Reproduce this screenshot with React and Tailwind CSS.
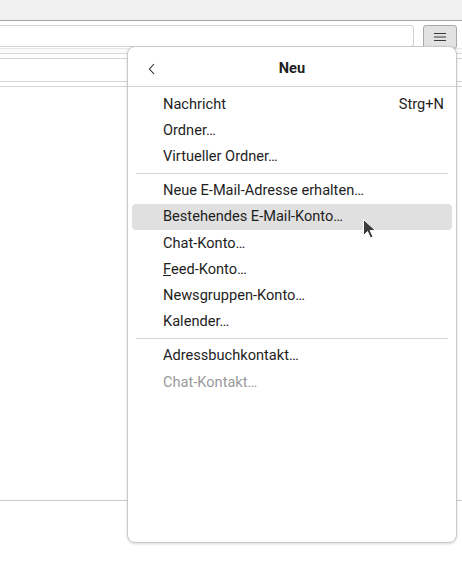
import React from "react";

const items = [
  { label: "Nachricht", shortcut: "Strg+N" },
  { label: "Ordner…" },
  { label: "Virtueller Ordner…" },
  { sep: true },
  { label: "Neue E-Mail-Adresse erhalten…" },
  { label: "Bestehendes E-Mail-Konto…", active: true },
  { label: "Chat-Konto…" },
  { label: <><span className="underline">F</span>eed-Konto…</> },
  { label: <>News<span className="underline">g</span>ruppen-Konto…</> },
  { label: "Kalender…" },
  { sep: true },
  { label: "Adressbuchkontakt…" },
  { label: "Chat-Kontakt…", disabled: true },
];

const MenuItem = ({ item }) => {
  if (item.sep) return <div className="mx-[8px] mt-[3px] mb-[4px] h-px bg-[#d6d6d6]" />;
  return (
    <div
      className={
        "mx-[4px] h-[26.2px] flex items-center justify-between rounded-[4px] pl-[31px] pr-[8px] " +
        (item.active ? "bg-[#e0e0e0] " : "") +
        (item.disabled ? "text-[#9a9a9a]" : "text-[#1e1e1e]")
      }
    >
      <span>{item.label}</span>
      {item.shortcut && <span>{item.shortcut}</span>}
    </div>
  );
};

const App = () => {
  return (
    <div className="relative w-[462px] h-[581px] overflow-hidden bg-white font-[Roboto,'Noto_Sans',sans-serif] text-[14.6px]">
      {/* title strip */}
      <div className="h-[21px] bg-[#f0f0f0] border-b border-[#a4a4a4]" />

      {/* toolbar */}
      <div className="h-[27px] flex items-start pt-[4px] pr-[5px]">
        <div className="-ml-[10px] flex-1 h-[22px] rounded-[3px] border border-[#d2d2d2] bg-white" />
        <div className="ml-[9px] w-[34px] h-[24px] rounded-[3px] border border-[#a9a9a9] bg-[#e2e2e2] flex items-center justify-center">
          <svg width="14" height="10" viewBox="0 0 14 10" stroke="#3a3a3a" strokeWidth="1">
            <path d="M1 1.5h12M1 5h12M1 8.5h12" />
          </svg>
        </div>
      </div>

      {/* thread pane header */}
      <div className="border-t border-[#e6e6e6] h-[5px] bg-[#fafafa]" />
      <div className="border-t border-[#d9d9d9] h-[5px]" />
      <div className="h-[24px] border-y border-[#d4d4d4]" />
      <div className="h-[5px] border-b border-[#d6d6d6]" />

      {/* message area */}
      <div className="h-[413px]" />
      <div className="h-px bg-[#cacaca]" />

      {/* popup menu */}
      <div className="absolute left-[127px] top-[46px] w-[330px] h-[497px] rounded-[8px] border border-[#c9c9c9] bg-white shadow-[0_1px_3px_rgba(0,0,0,0.15)]">
        <div className="h-[40px] pt-[4px] relative flex items-center justify-center border-b border-[#d4d4d4]">
          <svg className="absolute left-[20px] top-[16px]" width="8" height="12" viewBox="0 0 8 12" fill="none" stroke="#2a2a2a" strokeWidth="1.1">
            <path d="M6 1 1.5 6 6 11" />
          </svg>
          <span className="font-bold text-[#1e1e1e]">Neu</span>
        </div>
        <div className="pt-[4.5px]">
          {items.map((it, i) => (
            <MenuItem key={i} item={it} />
          ))}
        </div>
      </div>

      {/* mouse cursor */}
      <svg className="absolute left-[362px] top-[218px]" width="16" height="22" viewBox="0 0 16 22">
        <path d="M1.5 1.5v16l4-4 3 6.5 2.6-1.2-3-6.3h5.5z" fill="#3c3c3c" stroke="#fff" strokeWidth="1" strokeLinejoin="round" />
      </svg>
    </div>
  );
};

export default App;
